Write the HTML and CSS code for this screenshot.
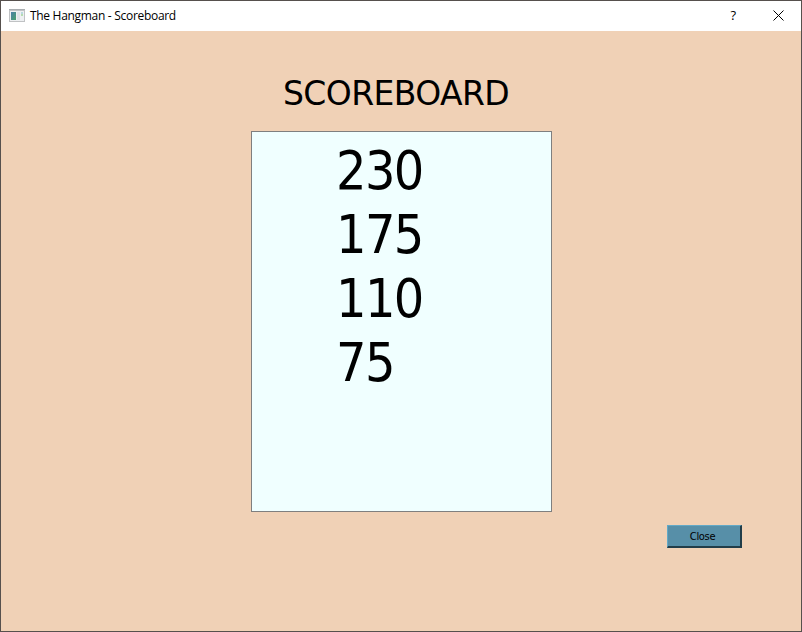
FILE: index.html
```
<!DOCTYPE html>
<html lang="en">
<head>
<meta charset="utf-8">
<title>The Hangman - Scoreboard</title>
<link rel="stylesheet" href="styles.css">
</head>
<body>
<div class="window">
  <header class="titlebar">
    <svg class="app-icon" width="16" height="14" viewBox="0 0 16 14" shape-rendering="crispEdges">
      <defs>
        <linearGradient id="pane" x1="0" y1="0" x2="1" y2="1">
          <stop offset="0" stop-color="#4b7fa8"/>
          <stop offset="1" stop-color="#4aa06c"/>
        </linearGradient>
      </defs>
      <rect width="16" height="13" fill="#c0c2c4"/>
      <rect y="0" width="16" height="1" fill="#a9adb0"/>
      <rect x="1" y="2" width="14" height="10" fill="#eef0f2"/>
      <rect x="2" y="3" width="5" height="8" fill="url(#pane)"/>
      <rect x="8" y="3" width="3" height="8" fill="#e0e3e7"/>
      <rect x="12" y="3" width="2" height="3" fill="#b9d8df"/>
      <rect x="12" y="5" width="2" height="2" fill="#b5dbb0"/>
    </svg>
    <span class="title">The Hangman - Scoreboard</span>
    <span class="help">?</span>
    <svg class="close-icon" width="11" height="11" viewBox="0 0 11 11"><path d="M.5.5l10 10M10.5.5l-10 10" stroke="#000" stroke-width="1" fill="none"/></svg>
  </header>
  <main class="content">
    <h1 class="heading">SCOREBOARD</h1>
    <div class="scores">
      <div>230</div>
      <div>175</div>
      <div>110</div>
      <div>75</div>
    </div>
    <button class="close-button">Close</button>
  </main>
</div>
</body>
</html>
```
FILE: styles.css
```
* { box-sizing: border-box; }
body { margin: 0; color: #000; }
.window {
  width: 802px;
  height: 632px;
  display: flex;
  flex-direction: column;
  border: 1px solid #56504d;
  background: #f0d1b6;
}
.titlebar {
  height: 30px;
  display: flex;
  align-items: center;
  padding: 0 17px 0 8px;
  background: #fff;
  font: 12px/16px "Open Sans", sans-serif;
}
.app-icon { margin-top: -1px; }
.title { margin-left: 5px; letter-spacing: -0.3px; }
.help { margin: -2px 37px 0 auto; font-size: 13px; font-weight: 500; }
.close-icon { margin-top: -2px; }
.content { flex: 1; display: flex; flex-direction: column; }
.heading {
  margin: 44px 0 0 282px;
  font: 33px/38px "DejaVu Sans", sans-serif;
  letter-spacing: -0.6px;
}
.scores {
  width: 301px;
  height: 381px;
  margin: 18px 0 0 250px;
  padding: 7px 0 0 84px;
  border: 1px solid #7f7f7f;
  background: #f0ffff;
  font: 53.3px/64px "DejaVu Sans Condensed", "DejaVu Sans", sans-serif;
  font-stretch: condensed;
  letter-spacing: -1.6px;
}
.close-button {
  width: 75px;
  height: 23px;
  margin: 13px 0 0 666px;
  padding: 2px 3px 0 0;
  border: solid;
  border-width: 1px 2px 2px 1px;
  border-color: #63a9c6 #213d49 #213d49 #63a9c6;
  background: #578fa8;
  color: #000;
  font: 11px/18px "DejaVu Sans Condensed", "DejaVu Sans", sans-serif;
  font-stretch: condensed;
  letter-spacing: -0.3px;
}
```
